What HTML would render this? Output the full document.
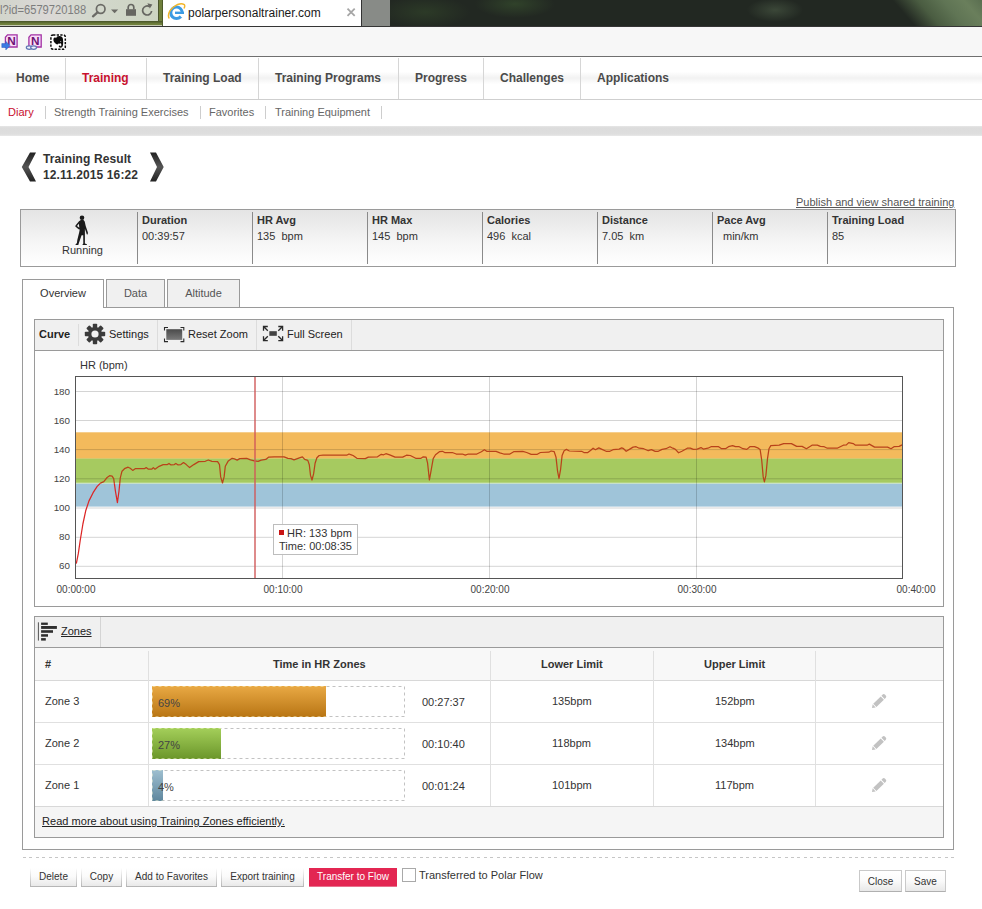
<!DOCTYPE html>
<html><head><meta charset="utf-8"><title>polarpersonaltrainer.com</title>
<style>
*{box-sizing:border-box}
html,body{margin:0;padding:0}
body{width:982px;height:909px;position:relative;overflow:hidden;background:#fff;font-family:"Liberation Sans",Arial,sans-serif;color:#333;font-size:11px}
.a{position:absolute}
.t{position:absolute;white-space:nowrap;line-height:1}
.b{font-weight:bold}
/* chrome */
#chrome{left:0;top:0;width:982px;height:25.600px;background:radial-gradient(ellipse 40px 14px at 515px 4px,#30422a 0,rgba(48,66,42,0) 100%),radial-gradient(ellipse 45px 16px at 425px 12px,#2c3a27 0,rgba(44,58,39,0) 100%),radial-gradient(ellipse 28px 12px at 775px 10px,#3b4738 0,rgba(59,71,56,0) 100%),#222822}
#addr{left:0;top:0;width:158.600px;height:21px;background:linear-gradient(90deg,#d2d5cc 0,#dbd8d6 30%,#d3d8cd 55%,#cdd4c2 100%);border-right:0.600px solid #4a552c}
#addrframe{left:0;top:0;width:162.600px;height:25.600px;background:linear-gradient(#6f7f3b 0,#6f7f3b 20.800px,#465228 21px,#556330 22px,#6b7b3a 23.500px,#73843e 25px,#b9bfa4 25.300px,#c9cdb9 25.600px);border-right:0.600px solid #4d5a2a}
#tab{left:163px;top:0;width:199px;height:25.500px;background:#fff;border-right:1px solid #333}
#newtab{left:362px;top:0;width:28px;height:25.600px;background:#888b87}
#tbar{left:0;top:25.600px;width:982px;height:30.400px;background:#f7f7f7;border-top:1.500px solid #353535}
#tline{left:0;top:55.600px;width:982px;height:3px;background:linear-gradient(#6c6c6c 0,#787878 60%,#c8c8c8 75%,#f2f2f2 100%)}
/* nav */
#nav{left:0;top:57px;width:982px;height:42px;background:linear-gradient(#fff 0,#fff 35%,#f2f2f2 50%,#fff 65%,#fff 100%)}
.ns{position:absolute;top:58px;width:1px;height:41px;background:#d6d6d6}
#navline{left:0;top:99px;width:982px;height:1px;background:#cfcfcf}
.nv{font-size:12px;font-weight:bold;color:#4a4a4a;top:72px}
.sn{font-size:11px;color:#666;top:107px}
.ss{position:absolute;top:106px;width:1px;height:13px;background:#cdcdcd}
#band{left:0;top:126px;width:982px;height:9.600px;background:linear-gradient(#e6e6e6 0,#dcdcdc 18%,#dedede 80%,#e9e9e9 100%)}
/* summary */
#sum{left:20px;top:209px;width:936px;height:58px;border:1px solid #9a9a9a;background:linear-gradient(#e4e4e4,#f6f6f6 60%,#fff)}
.sv{position:absolute;top:212px;width:1px;height:52px;background:#8a8a8a}
.sh{font-size:11px;font-weight:bold;color:#333;top:215px}
.sd{font-size:11px;color:#333;top:231px}
/* tabs */
.tab{position:absolute;top:279px;height:29px;border:1px solid #9a9a9a;background:#f0f0f0;font-size:11px;color:#555;text-align:center;line-height:27px}
#panel{left:22px;top:307px;width:932px;height:543px;border:1px solid #9a9a9a;background:#fff}
.box{position:absolute;border:1px solid #9a9a9a;background:#fff}
.tb{position:absolute;background:#f0f0f0;border-bottom:1px solid #9a9a9a}
.btn{position:absolute;top:868px;height:19px;padding:0 1px 1px 1px;background:linear-gradient(#fff 0,#e4e4e4 35%,#b4b4b4 100%);font-size:10px;color:#333;text-align:center;line-height:17px;white-space:nowrap}
.btn span{display:block;height:18px;background:linear-gradient(#fff 0,#fbfbfb 45%,#e9e9e9 100%)}
.btn2{position:absolute;top:870px;height:22px;border:1px solid #c9c9c9;border-bottom-color:#b0b0b0;background:linear-gradient(#fff 0,#fafafa 50%,#e8e8e8 100%);font-size:10px;color:#333;text-align:center;line-height:21px;white-space:nowrap}
.zr{font-size:11px;color:#333}
</style></head><body>

<!-- browser chrome -->
<div class="a" id="chrome"></div>
<div class="a" style="left:880px;top:0;width:102px;height:25.600px;background:linear-gradient(49deg,rgba(80,100,70,0) 0,rgba(80,100,70,0) 28%,#4a5c41 48%,#5f7454 68%,#6a7f5c 85%,#5a6e50 100%)"></div>
<div class="a" id="addrframe"></div>
<div class="a" id="addr"></div>
<div class="t" style="left:0px;top:3.500px;font-size:12.500px;color:#7d7d7d;transform:scaleX(0.895);transform-origin:0 0">l?id=6579720188</div>
<svg class="a" style="left:88px;top:0px" width="70" height="22" viewBox="88 0 70 22">
 <circle cx="100.700" cy="9" r="4.300" fill="none" stroke="#6b6b66" stroke-width="1.700"/><path d="M97.500 12.300 L93 16.300" stroke="#6b6b66" stroke-width="2.300" stroke-linecap="round"/>
 <path d="M111 9.500 h7.200 l-3.600 3.800z" fill="#6b6b66"/>
 <rect x="126" y="9.200" width="10" height="6.600" fill="#666661"/><path d="M128.200 9.500 v-2.200 a2.800 2.800 0 0 1 5.600 0 V9.500" fill="none" stroke="#666661" stroke-width="1.700"/>
 <path d="M149.400 6.600 a4.500 4.500 0 1 0 2.200 4.400" fill="none" stroke="#666661" stroke-width="1.700"/><path d="M147.400 3.300 l5 1.300 -2.600 4z" fill="#666661"/>
</svg>
<div class="a" id="tab" style="z-index:2"></div>
<svg class="a" style="left:167px;top:2px;z-index:3" width="19" height="20" viewBox="0 0 19 20">
 <circle cx="9.500" cy="10.800" r="5.700" fill="none" stroke="#3c9be3" stroke-width="3"/>
 <rect x="8" y="9.600" width="9" height="2.400" fill="#3c9be3"/><path d="M11.500 12.100 h7 v3.200 h-4z" fill="#fff"/>
 <path d="M2.200 16.500 Q-0.500 11 6.500 5 Q13 0.200 17.300 2.600 Q18.300 4 17 6.500" fill="none" stroke="#f2b62b" stroke-width="1.500"/>
</svg>
<div class="t" style="left:188px;top:7px;font-size:12px;color:#1a1a1a;letter-spacing:0.030px;z-index:3">polarpersonaltrainer.com</div>
<svg class="a" style="left:346px;top:7px;z-index:3" width="10" height="10" viewBox="0 0 10 10"><path d="M1.500 1.600 L8.700 8.800 M8.700 1.600 L1.500 8.800" stroke="#a6a6a6" stroke-width="1.800"/></svg>
<div class="a" id="newtab"></div>
<div class="a" id="tbar"></div>
<div class="a" id="tline"></div>
<!-- toolbar icons -->
<svg class="a" style="left:0;top:30px" width="70" height="24" viewBox="0 30 70 24">
 <path d="M7.500 34.800 h9.600 v12.200 h-11.700 v-9.800z" fill="#f9dcf9" stroke="#a232a4" stroke-width="1.300"/>
 <text x="7.300" y="45.300" font-family="Liberation Sans, sans-serif" font-weight="bold" font-size="11.800" fill="#6d1274">N</text>
 <path d="M1.800 43.600 h4 v-2.300 l4.200 4.400 -4.200 4.200 v-2.400 h-4z" fill="#3b7be2" stroke="#2a5fc0" stroke-width="0.500"/>
 <path d="M31 34.800 h10.200 v12.200 h-12.300 v-9.800z" fill="#f9dcf9" stroke="#a232a4" stroke-width="1.300"/>
 <text x="31.100" y="45.300" font-family="Liberation Sans, sans-serif" font-weight="bold" font-size="11.800" fill="#6d1274">N</text>
 <ellipse cx="29.200" cy="47.600" rx="2.900" ry="1.700" fill="#eef2fb" stroke="#5f78b4" stroke-width="1.200"/><ellipse cx="33.600" cy="47.600" rx="2.900" ry="1.700" fill="#eef2fb" stroke="#5f78b4" stroke-width="1.200"/>
 <rect x="50.900" y="34.900" width="14.400" height="14.400" rx="2.200" fill="#fff" stroke="#0c0c0c" stroke-width="1.500" stroke-dasharray="2.300 1.300"/>
 <path d="M53.400 39.200 Q53.300 37.600 55.200 37.300 L56 38.300 Q56.400 36.200 59.200 36.100 Q62.300 36 62.900 38.800 Q63.500 42.300 63 45.300 Q62.500 47.900 60.400 47.800 Q58.700 47.700 58.700 46.300 Q58.800 45.300 59.900 45.400 Q60.500 45.500 60.400 46.300 L61.200 46.300 Q61.600 44.400 60.900 43.200 Q59.500 44 58.100 43.500 Q57.800 44.800 56.600 44.300 Q55 43.500 54.100 42 Q53.300 40.700 53.400 39.200z" fill="#0c0c0c"/>
 <ellipse cx="60.700" cy="41.400" rx="0.700" ry="0.450" fill="#eee"/>
</svg>

<!-- nav -->
<div class="a" id="nav"></div>
<div class="ns" style="left:65px"></div><div class="ns" style="left:146px"></div><div class="ns" style="left:258px"></div><div class="ns" style="left:398px"></div><div class="ns" style="left:483px"></div><div class="ns" style="left:580px"></div>
<div class="a" id="navline"></div>
<div class="t nv" style="left:16px">Home</div>
<div class="t nv" style="left:82px;color:#c8102e">Training</div>
<div class="t nv" style="left:163px">Training Load</div>
<div class="t nv" style="left:275px">Training Programs</div>
<div class="t nv" style="left:415px">Progress</div>
<div class="t nv" style="left:500px">Challenges</div>
<div class="t nv" style="left:597px">Applications</div>
<div class="t sn" style="left:8px;color:#c8102e">Diary</div>
<div class="ss" style="left:45px"></div>
<div class="t sn" style="left:54px">Strength Training Exercises</div>
<div class="ss" style="left:200px"></div>
<div class="t sn" style="left:209px">Favorites</div>
<div class="ss" style="left:265px"></div>
<div class="t sn" style="left:275px">Training Equipment</div>
<div class="ss" style="left:381px"></div>
<div class="a" id="band"></div>

<!-- header -->
<svg class="a" style="left:20px;top:151px" width="146" height="32" viewBox="0 0 146 32">
 <defs><linearGradient id="ag" x1="0" y1="0" x2="0" y2="1"><stop offset="0" stop-color="#222"/><stop offset="0.5" stop-color="#555"/><stop offset="1" stop-color="#222"/></linearGradient></defs>
 <path d="M10 1.5 h6 L8.5 16 L16 30.500 h-6 L1.800 16z" fill="url(#ag)"/>
 <path d="M130 1.500 h6 L143.700 16 L136 30.500 h-6 L137 16z" fill="url(#ag)"/>
</svg>
<div class="t b" style="left:43px;top:153px;font-size:12px;color:#333;letter-spacing:0.1px">Training Result</div>
<div class="t b" style="left:43px;top:169px;font-size:12px;color:#333;letter-spacing:0.1px">12.11.2015 16:22</div>
<div class="t" style="left:796px;top:197px;font-size:11px;color:#555;text-decoration:underline">Publish and view shared training</div>

<!-- summary -->
<div class="a" id="sum"></div>
<div class="sv" style="left:137px"></div><div class="sv" style="left:252px"></div><div class="sv" style="left:367px"></div><div class="sv" style="left:482px"></div><div class="sv" style="left:597px"></div><div class="sv" style="left:712px"></div><div class="sv" style="left:827px"></div>
<svg class="a" style="left:70px;top:213px" width="24" height="34" viewBox="70 213 24 34">
 <circle cx="82" cy="217.700" r="2.300" fill="#1a1a1a"/>
 <path d="M81.200 219.800 L83.300 219.800 L84.700 221.600 L85.700 226 L87.900 232.500 L87.700 234.400 L86.700 234.300 L86.300 232.800 L84.900 228.800 L84.900 243.400 L86.900 244.300 L86.900 245 L82.300 245 L83.300 243.600 L83.200 235.200 L81.600 235.200 L78.900 243 L78.300 245 L75.200 245 L76.900 243 L77.300 240 L79.200 232.200 L79.700 229.600 L78.600 229.200 L75.300 226.500 L75.500 225.500 L79 221.300 Z M78.900 223.800 L77 226.100 L79.300 227.800z" fill="#1a1a1a" fill-rule="evenodd"/>
</svg>
<div class="t" style="left:62px;top:245px;font-size:11px;color:#333">Running</div>
<div class="t sh" style="left:142px">Duration</div><div class="t sd" style="left:142px">00:39:57</div>
<div class="t sh" style="left:257px">HR Avg</div><div class="t sd" style="left:257px">135&nbsp; bpm</div>
<div class="t sh" style="left:372px">HR Max</div><div class="t sd" style="left:372px">145&nbsp; bpm</div>
<div class="t sh" style="left:487px">Calories</div><div class="t sd" style="left:487px">496&nbsp; kcal</div>
<div class="t sh" style="left:602px">Distance</div><div class="t sd" style="left:602px">7.05&nbsp; km</div>
<div class="t sh" style="left:717px">Pace Avg</div><div class="t sd" style="left:723px">min/km</div>
<div class="t sh" style="left:832px">Training Load</div><div class="t sd" style="left:832px">85</div>

<!-- tabs + panel -->
<div class="a" id="panel"></div>
<div class="tab" style="left:22px;width:82px;background:#fff;border-bottom:0;color:#333;height:29px">Overview</div><div class="a" style="left:23px;top:307px;width:80px;height:1px;background:#fff"></div>
<div class="tab" style="left:106px;width:59px">Data</div>
<div class="tab" style="left:167px;width:73px">Altitude</div>

<!-- curve box -->
<div class="box" style="left:34px;top:319px;width:910px;height:288px"></div>
<div class="tb" style="left:35px;top:320px;width:908px;height:31px"></div>
<div class="a" style="left:78px;top:324px;width:1px;height:22px;background:#dcdcdc"></div>
<div class="a" style="left:157px;top:320px;width:1px;height:30px;background:#dcdcdc"></div>
<div class="a" style="left:256px;top:320px;width:1px;height:30px;background:#dcdcdc"></div>
<div class="a" style="left:351px;top:320px;width:1px;height:30px;background:#dcdcdc"></div>
<div class="t b" style="left:39px;top:329px;font-size:11px;color:#222">Curve</div>
<div class="t" style="left:109px;top:329px;font-size:11px;color:#222">Settings</div>
<div class="t" style="left:188px;top:329px;font-size:11px;color:#222">Reset Zoom</div>
<div class="t" style="left:287px;top:329px;font-size:11px;color:#222">Full Screen</div>
<svg class="a" style="left:84px;top:323px" width="22" height="22" viewBox="0 0 22 22">
 <g fill="#3a3a3a"><circle cx="11" cy="11" r="7"/>
 <g id="tg"><rect x="8.800" y="0.800" width="4.400" height="20.400" rx="0.800"/></g>
 <rect x="8.800" y="0.800" width="4.400" height="20.400" rx="0.800" transform="rotate(45 11 11)"/>
 <rect x="8.800" y="0.800" width="4.400" height="20.400" rx="0.800" transform="rotate(90 11 11)"/>
 <rect x="8.800" y="0.800" width="4.400" height="20.400" rx="0.800" transform="rotate(135 11 11)"/></g>
 <circle cx="11" cy="11" r="3.600" fill="#f0f0f0"/>
</svg>
<svg class="a" style="left:163px;top:326px" width="23" height="18" viewBox="163 326 23 18">
 <defs><linearGradient id="rz" x1="0" y1="0" x2="0" y2="1"><stop offset="0" stop-color="#4a4a4a"/><stop offset="1" stop-color="#7a7a7a"/></linearGradient></defs>
 <rect x="166.300" y="329.200" width="15.900" height="10.700" fill="url(#rz)"/>
 <path d="M164.500 330.500 V327.500 H168 M180.500 327.500 H183.800 V330.500 M164.500 338.500 V341.600 H168 M180.500 341.600 H183.800 V338.500" fill="none" stroke="#2a2a2a" stroke-width="1.100"/>
</svg>
<svg class="a" style="left:262px;top:325px" width="24" height="18" viewBox="262 325 24 18">
 <rect x="269.300" y="331.200" width="7.500" height="4.600" fill="#444"/>
 <g fill="none" stroke="#2a2a2a" stroke-width="1.300"><path d="M263.500 330.800 V326.500 H267.800 M263.800 326.800 L267.800 330.800"/><path d="M282.600 330.800 V326.500 H278.300 M282.300 326.800 L278.300 330.800"/><path d="M263.500 336.300 V340.600 H267.800 M263.800 340.300 L267.800 336.300"/><path d="M282.600 336.300 V340.600 H278.300 M282.300 340.300 L278.300 336.300"/></g>
</svg>

<!-- chart -->
<svg class="a" style="left:0;top:355px" width="982" height="250" viewBox="0 355 982 250" font-family="Liberation Sans, Arial, sans-serif">
 <rect x="75.500" y="376.500" width="827" height="202" fill="#fff"/>
 <defs><clipPath id="cA"><rect x="76" y="432.300" width="827" height="51"/></clipPath><clipPath id="cB"><rect x="76" y="483.300" width="827" height="95"/></clipPath></defs>
 <rect x="76" y="432.300" width="826" height="26.200" fill="#f3ba5c"/>
 <rect x="76" y="458.500" width="826" height="24.500" fill="#a6ca60"/>
 <rect x="76" y="483" width="826" height="23.600" fill="#9fc4d9"/>
 <path d="M76 458.500H902" stroke="#d4c56a" stroke-width="0.800"/>
 <path d="M76 483.200H902" stroke="#d9edc4" stroke-width="1"/>
 <g stroke="#000" stroke-opacity="0.170" stroke-width="1"><path d="M76 391.500H902M76 420.500H902M76 449.600H902M76 478.800H902M76 508H902M76 537.300H902M76 566.300H902"/></g>
 <g stroke="#000" stroke-opacity="0.170" stroke-width="1"><path d="M282.500 377V578M489.500 377V578M696.500 377V578"/></g>
 <polyline points="76.3,563.6 78.3,553.7 80.2,540.5 82.9,524 85.7,510.8 89,500.9 93.1,492.7 97.2,486.4 100.5,483.1 103.8,481.6 107.1,477.5 109.6,475.7 112.1,476.2 113.7,478.6 115.4,491 117.4,502.6 119,491 120.3,477.8 122,471.2 124.5,468.7 128.1,467.2 130.2,468.2 132.7,470.4 135.2,468.7 144.3,468.7 146.2,467.6 148.4,469.2 151.7,469.2 153.3,467.6 155,469.2 159.1,466.3 163.2,464.6 167.4,464.6 169,463.4 171,464.9 174.3,464.6 175.9,463.4 178.1,464.9 180.9,464.6 183.5,462.6 186.3,464.6 189.6,467.6 193.8,464.6 198.7,461.6 205.3,461.3 208.3,460 211.9,461.3 217.6,461.7 219.5,464.7 220.7,476.9 222.5,483 224.1,476.9 225.3,466.2 228.3,460.9 232.1,458.3 234.4,458.9 237.2,460.1 239.8,458.6 246.7,458.3 250.5,459.8 254.3,460.9 258.1,461.4 261.2,460.1 265.8,459.4 268.8,457.1 274.2,456.8 284.1,456.8 287.9,458.3 291,458.6 294,459.8 299.4,457.8 302.4,456.8 304.7,459.4 307.8,460.4 309.3,464.7 310.5,475.4 312,480 313.6,473.9 315.1,463.2 316.9,457.8 319.2,455.5 323,455.2 346.7,455.2 349,454 351.3,454.8 353.1,455.5 356.9,458.3 365.3,458.6 368.3,457.1 377.5,456.8 381.3,454.3 383.6,454.8 385.9,453.7 389.7,454.8 395.1,457.1 402.7,457.1 406.5,455.2 410.3,455.5 415.7,458.3 421,458.3 423.3,456.8 426.1,457.1 427.6,463.2 429.4,480 431.3,469.3 433.2,458.6 435.5,454.8 439.4,451.7 442.4,451.3 444.7,452.5 452.3,452.5 456.2,454 462.3,454 465.3,455.2 468.4,454 476.8,454 481.4,451.7 484.4,449.7 486.7,451.3 496.1,451.3 499.9,452.8 503.7,454 509.9,454 513.7,451.7 522.8,451.3 526.7,452.5 531.2,454.3 537.3,454.3 540.4,452.5 548.8,452.2 551.1,451 554.2,451.7 556,457.1 557.5,470.8 559,478.5 560.6,469.3 562.1,455.5 564.1,450.7 566.4,449.4 569.4,451 581.6,451.3 583.9,452.5 587.8,452.5 590.8,450.2 593.1,448.2 595.4,449.7 598.8,447.9 601.5,449.1 606.1,451.3 609.9,451.3 613,449.7 619.1,449.1 621.7,447.9 623.6,448.7 626.2,451.3 629.8,449.1 633.1,447.1 636.1,446.7 639.2,448.2 643.7,448.7 648.3,450.7 651.4,449.7 655.2,451.3 658.3,451.3 662.1,449.4 665.9,448.7 670,446.7 672.8,448.2 675.1,449.1 678.6,452.8 681.9,451.3 687.3,448.2 690.3,448.2 693.4,449.4 697.2,449.1 701,447.6 703.3,449.1 707.9,448.2 711,446.7 718.6,446.7 721.6,448.7 725.5,448.7 728.5,446.7 732.6,445.6 735.4,446.7 739.2,446.7 743,448.7 746.8,449.4 749.9,446.7 754.5,446.7 758.3,448.2 760.1,449.4 761.7,460.1 763.2,476.9 764.4,481.8 765.9,475.4 767.5,458.6 769,448.7 770.8,445.6 779.2,445.2 783.7,443.6 791.4,443.6 796.7,446.4 802.1,446.4 806.4,448.7 812,445.2 817.3,445.2 820.4,446.4 824.2,446.7 827.3,448.2 837.2,448.2 843.3,445.2 846.4,444.9 848.7,442.6 853.2,443.6 855.5,445.2 867,445.2 869.3,444.1 874.6,447.1 887.6,447.1 891,448.7 894,446.7 899.1,446.4 902.1,444.9" fill="none" stroke="#b9431a" stroke-width="1.250" stroke-linejoin="round" clip-path="url(#cA)"/>
 <polyline points="76.3,563.6 78.3,553.7 80.2,540.5 82.9,524 85.7,510.8 89,500.9 93.1,492.7 97.2,486.4 100.5,483.1 103.8,481.6 107.1,477.5 109.6,475.7 112.1,476.2 113.7,478.6 115.4,491 117.4,502.6 119,491 120.3,477.8 122,471.2 124.5,468.7 128.1,467.2 130.2,468.2 132.7,470.4 135.2,468.7 144.3,468.7 146.2,467.6 148.4,469.2 151.7,469.2 153.3,467.6 155,469.2 159.1,466.3 163.2,464.6 167.4,464.6 169,463.4 171,464.9 174.3,464.6 175.9,463.4 178.1,464.9 180.9,464.6 183.5,462.6 186.3,464.6 189.6,467.6 193.8,464.6 198.7,461.6 205.3,461.3 208.3,460 211.9,461.3 217.6,461.7 219.5,464.7 220.7,476.9 222.5,483 224.1,476.9 225.3,466.2 228.3,460.9 232.1,458.3 234.4,458.9 237.2,460.1 239.8,458.6 246.7,458.3 250.5,459.8 254.3,460.9 258.1,461.4 261.2,460.1 265.8,459.4 268.8,457.1 274.2,456.8 284.1,456.8 287.9,458.3 291,458.6 294,459.8 299.4,457.8 302.4,456.8 304.7,459.4 307.8,460.4 309.3,464.7 310.5,475.4 312,480 313.6,473.9 315.1,463.2 316.9,457.8 319.2,455.5 323,455.2 346.7,455.2 349,454 351.3,454.8 353.1,455.5 356.9,458.3 365.3,458.6 368.3,457.1 377.5,456.8 381.3,454.3 383.6,454.8 385.9,453.7 389.7,454.8 395.1,457.1 402.7,457.1 406.5,455.2 410.3,455.5 415.7,458.3 421,458.3 423.3,456.8 426.1,457.1 427.6,463.2 429.4,480 431.3,469.3 433.2,458.6 435.5,454.8 439.4,451.7 442.4,451.3 444.7,452.5 452.3,452.5 456.2,454 462.3,454 465.3,455.2 468.4,454 476.8,454 481.4,451.7 484.4,449.7 486.7,451.3 496.1,451.3 499.9,452.8 503.7,454 509.9,454 513.7,451.7 522.8,451.3 526.7,452.5 531.2,454.3 537.3,454.3 540.4,452.5 548.8,452.2 551.1,451 554.2,451.7 556,457.1 557.5,470.8 559,478.5 560.6,469.3 562.1,455.5 564.1,450.7 566.4,449.4 569.4,451 581.6,451.3 583.9,452.5 587.8,452.5 590.8,450.2 593.1,448.2 595.4,449.7 598.8,447.9 601.5,449.1 606.1,451.3 609.9,451.3 613,449.7 619.1,449.1 621.7,447.9 623.6,448.7 626.2,451.3 629.8,449.1 633.1,447.1 636.1,446.7 639.2,448.2 643.7,448.7 648.3,450.7 651.4,449.7 655.2,451.3 658.3,451.3 662.1,449.4 665.9,448.7 670,446.7 672.8,448.2 675.1,449.1 678.6,452.8 681.9,451.3 687.3,448.2 690.3,448.2 693.4,449.4 697.2,449.1 701,447.6 703.3,449.1 707.9,448.2 711,446.7 718.6,446.7 721.6,448.7 725.5,448.7 728.5,446.7 732.6,445.6 735.4,446.7 739.2,446.7 743,448.7 746.8,449.4 749.9,446.7 754.5,446.7 758.3,448.2 760.1,449.4 761.7,460.1 763.2,476.9 764.4,481.8 765.9,475.4 767.5,458.6 769,448.7 770.8,445.6 779.2,445.2 783.7,443.6 791.4,443.6 796.7,446.4 802.1,446.4 806.4,448.7 812,445.2 817.3,445.2 820.4,446.4 824.2,446.7 827.3,448.2 837.2,448.2 843.3,445.2 846.4,444.9 848.7,442.6 853.2,443.6 855.5,445.2 867,445.2 869.3,444.1 874.6,447.1 887.6,447.1 891,448.7 894,446.7 899.1,446.4 902.1,444.9" fill="none" stroke="#dc2626" stroke-width="1.250" stroke-linejoin="round" clip-path="url(#cB)"/>
 <rect x="75.500" y="376.500" width="827" height="202" fill="none" stroke="#555" stroke-width="1"/>
 <path d="M255 377V578" stroke="#d05a5a" stroke-width="1.400"/>
 <rect x="273.500" y="524.500" width="84" height="30" fill="#fff" fill-opacity="0.920" stroke="#bdbdbd"/>
 <rect x="279" y="530" width="5" height="5" fill="#c81414"/>
 <text x="287" y="537" font-size="11" fill="#333">HR: 133 bpm</text>
 <text x="279" y="550" font-size="11" fill="#333">Time: 00:08:35</text>
 <text x="80" y="369" font-size="11" fill="#333">HR (bpm)</text>
 <g font-size="9.800" fill="#444" text-anchor="end"><text x="70" y="395">180</text><text x="70" y="424">160</text><text x="70" y="453">140</text><text x="70" y="482">120</text><text x="70" y="511">100</text><text x="70" y="540">80</text><text x="70" y="569">60</text></g>
 <g font-size="10" fill="#444" text-anchor="middle"><text x="76" y="593">00:00:00</text><text x="283" y="593">00:10:00</text><text x="490" y="593">00:20:00</text><text x="697" y="593">00:30:00</text><text x="916" y="593">00:40:00</text></g>
</svg>

<!-- zones box -->
<div class="box" style="left:34px;top:616px;width:910px;height:222px;background:#f5f5f5"></div>
<div class="tb" style="left:35px;top:617px;width:908px;height:31px"></div>
<div class="a" style="left:100px;top:617px;width:1px;height:30px;background:#d4d4d4"></div>
<svg class="a" style="left:37px;top:621px" width="22" height="22" viewBox="37 621 22 22">
 <rect x="37.900" y="622.300" width="1" height="18.300" fill="#555"/>
 <g fill="#2e2e2e"><rect x="41.100" y="622.600" width="6.700" height="2.300"/><rect x="41.100" y="626" width="15.800" height="2.900"/><rect x="41.100" y="630.200" width="11.900" height="2.600"/><rect x="41.100" y="634.200" width="6.900" height="2.500"/><rect x="41.100" y="638.100" width="4.700" height="2.500"/></g>
</svg>
<div class="t" style="left:61px;top:626px;font-size:11px;color:#222;text-decoration:underline">Zones</div>
<!-- table -->
<div class="a" style="left:35px;top:648px;width:908px;height:33px;background:#f8f8f8;border-bottom:1px solid #d8d8d8"></div>
<div class="a" style="left:35px;top:681px;width:908px;height:125px;background:#fff"></div>
<div class="a" style="left:35px;top:722px;width:908px;height:1px;background:#e0e0e0"></div>
<div class="a" style="left:35px;top:764px;width:908px;height:1px;background:#e0e0e0"></div>
<div class="a" style="left:35px;top:806px;width:908px;height:1px;background:#d8d8d8"></div>
<div class="a" style="left:148px;top:651px;width:1px;height:155px;background:#e0e0e0"></div>
<div class="a" style="left:490px;top:651px;width:1px;height:155px;background:#e0e0e0"></div>
<div class="a" style="left:653px;top:651px;width:1px;height:155px;background:#e0e0e0"></div>
<div class="a" style="left:815px;top:651px;width:1px;height:155px;background:#e0e0e0"></div>
<div class="t b zr" style="left:45px;top:659px">#</div>
<div class="t b zr" style="left:273px;top:659px">Time in HR Zones</div>
<div class="t b zr" style="left:541px;top:659px">Lower Limit</div>
<div class="t b zr" style="left:704px;top:659px">Upper Limit</div>
<div class="t zr" style="left:45px;top:696px">Zone 3</div>
<div class="a" style="left:152px;top:686px;width:174px;height:31px;background:linear-gradient(#e9a944,#b87514)"></div>
<svg class="a" style="left:152px;top:686px" width="253" height="31" viewBox="0 0 253 31"><defs><clipPath id="zc0"><rect x="174" y="0" width="79" height="31"/></clipPath><clipPath id="zd0"><rect x="0" y="0" width="174" height="31"/></clipPath></defs><rect x="0.500" y="0.500" width="252" height="30" fill="none" stroke="#c2c2c2" stroke-dasharray="3 3" clip-path="url(#zc0)"/><rect x="0.500" y="0.500" width="252" height="30" fill="none" stroke="#ffffd8" stroke-opacity="0.450" stroke-dasharray="3 3" clip-path="url(#zd0)"/></svg>
<div class="t zr" style="left:158px;top:698px;color:#444">69%</div>
<div class="t zr" style="left:422px;top:697px">00:27:37</div>
<div class="t zr" style="left:552px;top:696px">135bpm</div>
<div class="t zr" style="left:715px;top:696px">152bpm</div>
<svg class="a" style="left:868px;top:690px" width="20" height="20" viewBox="0 0 20 20"><path d="M4.00 18.00 L7.68 17.50 L4.65 14.34z M8.41 16.95 L15.91 9.74 L12.72 6.43 L5.22 13.64z M16.63 9.05 L17.85 7.87 Q19.01 6.76 17.41 5.10 Q15.82 3.45 14.66 4.56 L13.44 5.73z" fill="#c2c2c2"/></svg>
<div class="t zr" style="left:45px;top:738px">Zone 2</div>
<div class="a" style="left:152px;top:728px;width:69px;height:31px;background:linear-gradient(#a4cf5a,#6b962a)"></div>
<svg class="a" style="left:152px;top:728px" width="253" height="31" viewBox="0 0 253 31"><defs><clipPath id="zc1"><rect x="69" y="0" width="184" height="31"/></clipPath><clipPath id="zd1"><rect x="0" y="0" width="69" height="31"/></clipPath></defs><rect x="0.500" y="0.500" width="252" height="30" fill="none" stroke="#c2c2c2" stroke-dasharray="3 3" clip-path="url(#zc1)"/><rect x="0.500" y="0.500" width="252" height="30" fill="none" stroke="#ffffd8" stroke-opacity="0.450" stroke-dasharray="3 3" clip-path="url(#zd1)"/></svg>
<div class="t zr" style="left:158px;top:740px;color:#444">27%</div>
<div class="t zr" style="left:422px;top:739px">00:10:40</div>
<div class="t zr" style="left:552px;top:738px">118bpm</div>
<div class="t zr" style="left:715px;top:738px">134bpm</div>
<svg class="a" style="left:868px;top:732px" width="20" height="20" viewBox="0 0 20 20"><path d="M4.00 18.00 L7.68 17.50 L4.65 14.34z M8.41 16.95 L15.91 9.74 L12.72 6.43 L5.22 13.64z M16.63 9.05 L17.85 7.87 Q19.01 6.76 17.41 5.10 Q15.82 3.45 14.66 4.56 L13.44 5.73z" fill="#c2c2c2"/></svg>
<div class="t zr" style="left:45px;top:780px">Zone 1</div>
<div class="a" style="left:152px;top:770px;width:11px;height:31px;background:linear-gradient(#9ebfd0,#5f879e)"></div>
<svg class="a" style="left:152px;top:770px" width="253" height="31" viewBox="0 0 253 31"><defs><clipPath id="zc2"><rect x="11" y="0" width="242" height="31"/></clipPath><clipPath id="zd2"><rect x="0" y="0" width="11" height="31"/></clipPath></defs><rect x="0.500" y="0.500" width="252" height="30" fill="none" stroke="#c2c2c2" stroke-dasharray="3 3" clip-path="url(#zc2)"/><rect x="0.500" y="0.500" width="252" height="30" fill="none" stroke="#ffffd8" stroke-opacity="0.450" stroke-dasharray="3 3" clip-path="url(#zd2)"/></svg>
<div class="t zr" style="left:158px;top:782px;color:#444">4%</div>
<div class="t zr" style="left:422px;top:781px">00:01:24</div>
<div class="t zr" style="left:552px;top:780px">101bpm</div>
<div class="t zr" style="left:715px;top:780px">117bpm</div>
<svg class="a" style="left:868px;top:774px" width="20" height="20" viewBox="0 0 20 20"><path d="M4.00 18.00 L7.68 17.50 L4.65 14.34z M8.41 16.95 L15.91 9.74 L12.72 6.43 L5.22 13.64z M16.63 9.05 L17.85 7.87 Q19.01 6.76 17.41 5.10 Q15.82 3.45 14.66 4.56 L13.44 5.73z" fill="#c2c2c2"/></svg>

<div class="t" style="left:42px;top:816px;font-size:11px;color:#222;text-decoration:underline;letter-spacing:0.035px">Read more about using Training Zones efficiently.</div>

<!-- bottom -->
<div class="a" style="left:22.800px;top:857px;width:933px;height:1px;background:repeating-linear-gradient(90deg,#c6c6c6 0,#c6c6c6 3px,transparent 3px,transparent 6.400px)"></div>
<div class="btn" style="left:30px;width:47px"><span>Delete</span></div>
<div class="btn" style="left:81px;width:41px"><span>Copy</span></div>
<div class="btn" style="left:126px;width:91px"><span>Add to Favorites</span></div>
<div class="btn" style="left:221px;width:83px"><span>Export training</span></div>
<div class="a" style="left:309px;top:868px;width:88px;height:18px;background:#e32652;color:#fff;font-size:10px;line-height:17px;text-align:center;white-space:nowrap;border-bottom:1px solid #e8708c;box-sizing:content-box">Transfer to Flow</div>
<div class="a" style="left:402px;top:868px;width:14px;height:14px;border:1px solid #a9a9a9;background:#fff"></div>
<div class="t" style="left:419px;top:870px;font-size:11px;color:#333">Transferred to Polar Flow</div>
<div class="btn2" style="left:859px;width:43px">Close</div>
<div class="btn2" style="left:905px;width:41px">Save</div>
</body></html>
